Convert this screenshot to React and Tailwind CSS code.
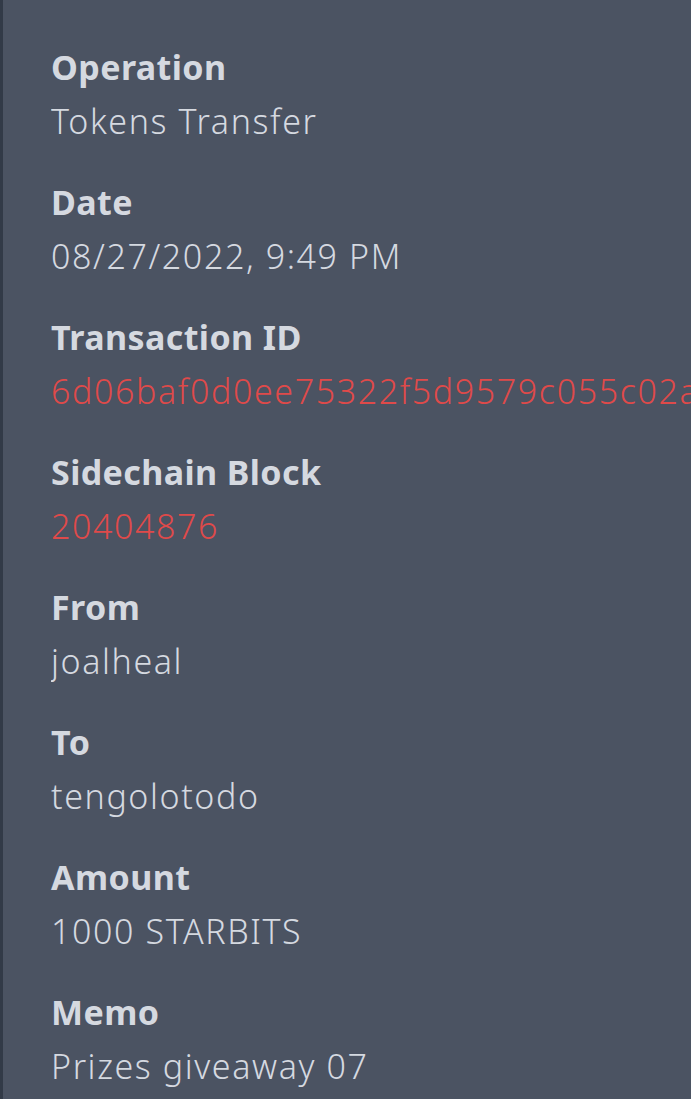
const rows = [
  { label: 'Operation', value: 'Tokens Transfer' },
  { label: 'Date', value: '08/27/2022, 9:49 PM' },
  { label: 'Transaction ID', value: '6d06baf0d0ee75322f5d9579c055c02a8e41b7c3d9f0a6e2', link: true },
  { label: 'Sidechain Block', value: '20404876', link: true },
  { label: 'From', value: 'joalheal' },
  { label: 'To', value: 'tengolotodo' },
  { label: 'Amount', value: '1000 STARBITS' },
  { label: 'Memo', value: 'Prizes giveaway 07' },
]

export default function App() {
  return (
    <div
      className="w-[691px] h-[1099px] overflow-hidden bg-[#4b5362] border-l-[3px] border-[#323a47] pl-[48px] pt-[40px]"
      style={{ fontFamily: '"Noto Sans", "Open Sans", sans-serif' }}
    >
      <div className="flex flex-col gap-[27px]">
        {rows.map(row => (
          <div key={row.label} className="flex flex-col">
            <div className="text-[34px] leading-[54px] font-bold tracking-[0.4px] text-[#d5d9e0]">{row.label}</div>
            <div
              className={`text-[34px] leading-[54px] font-light tracking-[1.6px] whitespace-nowrap overflow-hidden ${row.link ? 'text-[#df4a4a]' : 'text-[#d5d9e0]'}`}
            >
              {row.value}
            </div>
          </div>
        ))}
      </div>
    </div>
  )
}
